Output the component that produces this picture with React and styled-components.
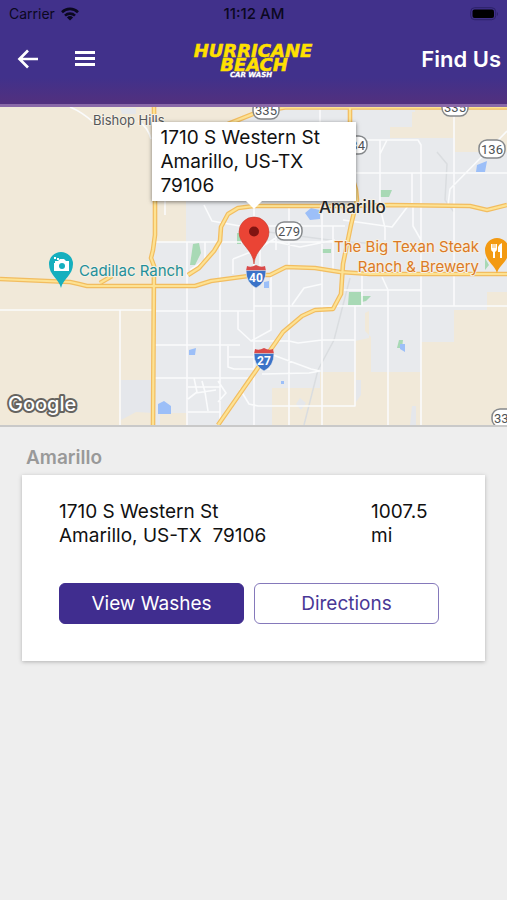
import React from "react";
import styled, { createGlobalStyle } from "styled-components";

const GlobalStyle = createGlobalStyle`
  * { box-sizing: border-box; }
  body {
    margin: 0;
    background: #eeeeee;
    color: #111111;
    font-family: Inter, "Liberation Sans", sans-serif;
  }
  button { font-family: inherit; cursor: pointer; }
`;

const Screen = styled.div`
  min-height: 100vh;
  background: #eeeeee;
`;

const Header = styled.header`
  background: linear-gradient(#41318b 0, #41318b 78px, #51307f 102px);
  border-bottom: 3px solid #8a69a8;
`;

const StatusBar = styled.div`
  display: grid;
  grid-template-columns: 1fr auto 1fr;
  align-items: center;
  height: 28px;
  padding: 0 8px 0 9px;
  color: #0b0820;
  font-size: 14px;
  line-height: 20px;
`;

const Carrier = styled.span`
  display: flex;
  align-items: center;
  gap: 6px;
`;

const Clock = styled.time`
  font-size: 15px;
  font-weight: 500;
`;

const BatterySlot = styled.span`
  display: flex;
  justify-content: flex-end;
`;

const NavBar = styled.nav`
  display: grid;
  grid-template-columns: 1fr auto 1fr;
  align-items: center;
  height: 76px;
  padding: 0 6px 14px;
`;

const NavActions = styled.div`
  display: flex;
  gap: 32px;
  padding-left: 10px;
`;

const IconButton = styled.button`
  display: flex;
  padding: 0;
  border: 0;
  background: none;
  color: #ffffff;
`;

const PageTitle = styled.h1`
  margin: 0;
  color: #ffffff;
  font-size: 22px;
  font-weight: 600;
  line-height: 26px;
  text-align: right;
`;

const MapArea = styled.section`
  position: relative;
  height: 320px;
  overflow: hidden;
  background: #e8eaed;
  border-bottom: 2px solid #c9c9c9;
`;

const MapCanvas = styled.svg`
  display: block;
  width: 100%;
  height: 100%;
  font-family: Inter, sans-serif;
`;

const Callout = styled.div`
  position: absolute;
  top: 15px;
  left: 50%;
  width: 204px;
  padding: 4px 9px 3px;
  transform: translateX(-50%);
  background: #ffffff;
  box-shadow: 0 1px 4px rgba(0, 0, 0, 0.5);
  font-size: 19px;
  line-height: 24px;

  &::after {
    content: "";
    position: absolute;
    top: 100%;
    left: 50%;
    transform: translateX(-50%);
    border: 8px solid transparent;
    border-top-color: #ffffff;
    border-bottom: 0;
  }
`;

const Results = styled.main`
  padding: 19px 22px;
`;

const City = styled.h2`
  margin: 0 0 5px 4px;
  color: #999999;
  font-size: 19px;
  font-weight: 600;
  line-height: 24px;
`;

const Card = styled.article`
  padding: 25px 46px 37px 37px;
  background: #ffffff;
  box-shadow: 0 1px 4px rgba(0, 0, 0, 0.25);
`;

const Details = styled.div`
  display: grid;
  grid-template-columns: 1fr 68px;
  font-size: 19px;
  line-height: 24px;
`;

const Address = styled.address`
  font-style: normal;
  white-space: pre-wrap;
`;

const Actions = styled.div`
  display: grid;
  grid-template-columns: 1fr 1fr;
  gap: 10px;
  margin-top: 35px;
`;

const ActionButton = styled.button`
  height: 41px;
  padding: 0;
  border: 1px solid ${(p) => (p.$filled ? "#402d8f" : "#8579bb")};
  border-radius: 6px;
  background: ${(p) => (p.$filled ? "#402d8f" : "#ffffff")};
  color: ${(p) => (p.$filled ? "#ffffff" : "#493896")};
  font-size: 19px;
  line-height: 24px;
`;

function Wifi() {
  return (
    <svg width="18" height="14" viewBox="0 0 18 14" fill="none" stroke="currentColor" strokeWidth="2.6" aria-hidden="true">
      <path d="M1 5.2a11.4 11.4 0 0 1 16 0" />
      <path d="M4 8.6a7.2 7.2 0 0 1 10 0" />
      <path d="M9 13.5 5.9 10.4a4.5 4.5 0 0 1 6.2 0Z" fill="currentColor" stroke="none" />
    </svg>
  );
}

function Battery() {
  return (
    <svg width="29" height="14" viewBox="0 0 29 14" aria-hidden="true">
      <rect x="0.7" y="0.7" width="25" height="12" rx="4" fill="none" stroke="#2c2268" />
      <rect x="2.5" y="2.5" width="21.5" height="8.5" rx="2" fill="#000" />
      <path d="M27 5v4q2-2 0-4Z" fill="#2c2268" />
    </svg>
  );
}

function Logo() {
  return (
    <svg width="128" height="38" viewBox="190 41 128 38" role="img" aria-label="Hurricane Beach Car Wash">
      <g fontFamily='"DejaVu Sans", sans-serif' fontWeight="700" fontStyle="italic" textAnchor="middle">
        <g fill="#ffe000" stroke="#ffe000" strokeWidth="0.5" fontSize="18">
          <text x="253" y="58">HURRICANE</text>
          <text x="254" y="72">BEACH</text>
        </g>
        <text x="251" y="78" fill="#fff" stroke="#fff" strokeWidth="0.3" fontSize="7">CAR WASH</text>
      </g>
    </svg>
  );
}

const HIGHWAYS = [
  "M154 107L155 200L155 235L153 250L151 258L154 266L153 425",
  "M0 279L70 282L79 284L87 286L160 286L195 286L211 281L256 275L270 275L286 267L315 268L340 272L370 274L507 274",
  "M188 275L199 268L214 251L220 241L221 227L228 214L238 208L254 206L345 206L390 205L470 206L487 210L507 205",
  "M100 283L112 276",
  "M228 124L258 112L285 107.5L507 107.5",
  "M350 107L350 170L356 190L357 200L351 225L343 264L341 294L333 309L315 310L302 316L283 332L269 352L218 425",
];

const STREETS =
  "M0 310H153M120 310V425M70 107Q82 112 93 122M138 121Q148 127 151 139" +
  "M153 242H345M187 242V425M220 242V425M254 195V425M289 208V425M322 208V425M153 311H254M254 306H507M153 345H240M153 378H254M153 345H187" +
  "M204 205L212 221L240 226L345 226M238 311V329L251 341L271 330V276M251 341H289L298 343L322 340H355" +
  "M228 346V367L234 369H270M229 357H256M273 355L311 369L320 371L309 373L262 374M240 389L249 404L258 406H355V340" +
  "M292 305L304 288L322 284M188 387H220M188 412H220M194 378L197 392L188 399M196 393L216 390M202 381L205 392L208 411M218 381L226 393L218 402" +
  "M233 274V259M233 259L256 250L271 241L300 222M260 275V244M289 243V274M271 241L300 247L335 240" +
  "M380 140V206M330 140H418L421 145V425M355 173H507M412 173V205M454 107V306M387 140L380 154M408 206L392 227L343 220M380 207L385 228V240" +
  "M507 131L450 189L448 205M320 107V123M362 275V306M382 277L388 290V425M344 290H421M413 207V226L421 240" +
  "M165 190L165 215M205 242V260L190 270M276 230V250M333 226V270M355 306V340";

function RouteShield({ x, y, children }) {
  return (
    <g transform={`translate(${x} ${y})`}>
      <rect x="-13" y="-9" width="26" height="18" rx="8" fill="#fff" stroke="#85888b" strokeWidth="1.5" />
      <text y="5" textAnchor="middle" fontFamily="Roboto, sans-serif" fontSize="13" fill="#4f5255">{children}</text>
    </g>
  );
}

function InterstateShield({ x, y, children }) {
  return (
    <g transform={`translate(${x} ${y})`}>
      <path d="M-9-11q4 2 9-1q5 3 9 1l1 5h-20Z" fill="#d94a4a" />
      <path d="M-10-6.5h20Q10 6 0 11Q-10 6-10-6.5Z" fill="#3b73c8" stroke="#e8eaed" strokeWidth="0.6" />
      <text y="4.5" textAnchor="middle" fontFamily="Roboto, sans-serif" fontSize="12" fontWeight="700" fill="#fff">{children}</text>
    </g>
  );
}

function CityMap() {
  return (
    <MapCanvas viewBox="0 107 507 318" preserveAspectRatio="xMidYMid slice" role="img" aria-label="Map of Amarillo">
      <g fill="#f1e9d9">
        <path d="M0 107H260L235 124H220V200H186V242H153V425H0Z" />
        <path d="M415 107H507V152H455V138H390V127H412V112H415Z" />
        <path d="M507 292H487V310H454V342H421V372H371V337L365 331V313L369 311V338L355 341V372H320V388H272V425H507Z" />
        <path d="M160 413H187V425H160Z" />
      </g>
      <g fill="#e5e7eb">
        <path d="M121 380H153V413L136 412L121 420Z" />
        <path d="M356 380H361V395L356 402ZM412 406H416V425H410ZM300 398L306 403L301 410L296 404ZM120 108H136V114H122Z" />
      </g>
      <path d="M437 152L447 164L445 200L454 212M350 278L334 340L318 370L304 425M268 232L345 242L387 244" fill="none" stroke="#dadde0" strokeWidth="1.5" />
      <g fill="#a8d9b5">
        <path d="M193 244L199 243L201 253L195 265H190ZM349 292H361V296H371L366 301L362 302V305H348ZM380 190H392L389 197H380ZM399 340H403L402 348H397ZM485 258L489 265L485 270ZM237 233H241V244H237ZM322 249H331V253H322Z" />
      </g>
      <g fill="#9cbff8">
        <path d="M305 213L311 208L320 210V219L310 220ZM477 165L487 161L485 172H476ZM158 404L164 401L171 406V414H158ZM189 350L196 348L195 355H189ZM400 344L405 344V352L400 349ZM264 282L269 281V288H264ZM281 381H284V384H281Z" />
      </g>
      <path d={STREETS} fill="none" stroke="#fafbfc" strokeWidth="1.6" strokeLinejoin="round" />
      <g fill="none" strokeLinejoin="round">
        {HIGHWAYS.map((d) => <path key={d} d={d} stroke="#f2bd60" strokeWidth="4.6" />)}
        {HIGHWAYS.map((d) => <path key={d} d={d} stroke="#fde293" strokeWidth="2.2" />)}
      </g>
      <RouteShield x={266} y={110}>335</RouteShield>
      <RouteShield x={455} y={107}>335</RouteShield>
      <RouteShield x={354} y={145}>434</RouteShield>
      <RouteShield x={492} y={149}>136</RouteShield>
      <RouteShield x={289} y={231}>279</RouteShield>
      <RouteShield x={505} y={418}>335</RouteShield>
      <InterstateShield x={256} y={277}>40</InterstateShield>
      <InterstateShield x={264} y={360}>27</InterstateShield>
      <g stroke="#f5f0e5" strokeWidth="2" strokeLinejoin="round" paintOrder="stroke">
        <text x="93" y="125" fontSize="13" fill="#555759">Bishop Hills</text>
        <text x="319" y="213" fontSize="17" fontWeight="500" fill="#252628">Amarillo</text>
        <text x="79" y="276" fontSize="15" fill="#238f9a">Cadillac Ranch</text>
        <g fontSize="15" fill="#dc7a24" textAnchor="end">
          <text x="479" y="252">The Big Texan Steak</text>
          <text x="479" y="272">Ranch &amp; Brewery</text>
        </g>
      </g>
      <g>
        <path d="M61 288C59 279 49 275 49 264A12 12 0 0 1 73 264C73 275 63 279 61 288Z" fill="#16afbe" />
        <path d="M55 261H58L60 259H64L66 261H69V271H54V263H55ZM54 257H56V259H54ZM57 258H59V260H57Z" fill="#fff" />
        <circle cx="62" cy="266" r="3" fill="#16afbe" />
      </g>
      <g>
        <path d="M497 273C495 265 485 261 485 250A12 12 0 0 1 509 250C509 261 499 265 497 273Z" fill="#f39a12" />
        <path d="M491 244H497V249Q497 251 495 252V258H493V252Q491 251 491 249Z" fill="#fff" />
        <path d="M493 244V248M495 244V248" stroke="#f39a12" strokeWidth="0.7" />
        <path d="M502 243V258H500V252H498V247Q499 244 502 243Z" fill="#fff" />
      </g>
      <path d="M254 264C253 249 239 245 239 232A15 15 0 0 1 269 232C269 245 255 249 254 264Z" fill="#ea4435" stroke="#c83a2e" strokeWidth="0.6" />
      <circle cx="254" cy="231.5" r="5" fill="#811411" />
      <text x="8" y="411" fontSize="20" fontWeight="500" fill="#fff" stroke="#666460" strokeWidth="4" strokeLinejoin="round" paintOrder="stroke">Google</text>
    </MapCanvas>
  );
}

export default function App() {
  return (
    <Screen>
      <GlobalStyle />
      <Header>
        <StatusBar>
          <Carrier>Carrier <Wifi /></Carrier>
          <Clock>11:12 AM</Clock>
          <BatterySlot><Battery /></BatterySlot>
        </StatusBar>
        <NavBar>
          <NavActions>
            <IconButton aria-label="Back">
              <svg width="25" height="24" viewBox="0 0 25 24" fill="none" stroke="currentColor" strokeWidth="2.7">
                <path d="M22 12H4M12 3.5L3.5 12L12 20.5" />
              </svg>
            </IconButton>
            <IconButton aria-label="Menu">
              <svg width="24" height="24" viewBox="0 0 24 24" fill="currentColor">
                <path d="M2 4H22V7H2ZM2 10H22V13H2ZM2 16H22V19H2Z" />
              </svg>
            </IconButton>
          </NavActions>
          <Logo />
          <PageTitle>Find Us</PageTitle>
        </NavBar>
      </Header>
      <MapArea>
        <CityMap />
        <Callout>1710 S Western St<br />Amarillo, US-TX<br />79106</Callout>
      </MapArea>
      <Results>
        <City>Amarillo</City>
        <Card>
          <Details>
            <Address>{"1710 S Western St\nAmarillo, US-TX  79106"}</Address>
            <span>1007.5 mi</span>
          </Details>
          <Actions>
            <ActionButton $filled>View Washes</ActionButton>
            <ActionButton>Directions</ActionButton>
          </Actions>
        </Card>
      </Results>
    </Screen>
  );
}
